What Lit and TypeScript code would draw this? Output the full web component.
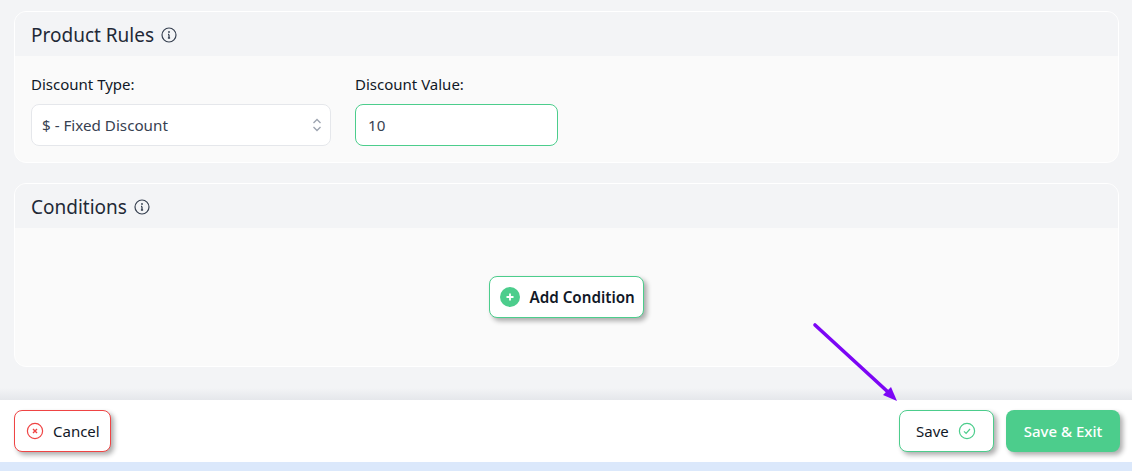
import { LitElement, html, css } from "lit";
import { customElement } from "lit/decorators.js";

const info = html`<svg class="info" viewBox="0 0 16 16" fill="none" stroke="#374151" stroke-width="1.2"><circle cx="8" cy="8" r="7"/><path d="M8 7.4v3.6M6.9 11h2.2M7 7.4h1" stroke-width="1.3"/><circle cx="8" cy="5" r=".9" fill="#374151" stroke="none"/></svg>`;

@customElement("app-root")
export class AppRoot extends LitElement {
  static styles = css`
    :host { display: block; position: relative; width: 1132px; height: 471px; overflow: hidden; background: #f3f4f6; font-family: "Noto Sans", "Open Sans", sans-serif; color: #111827; }
    * { box-sizing: border-box; }
    .page { display: flex; flex-direction: column; height: 100%; }
    .main { flex: 0 0 388px; padding: 11px 13px 0 14px; display: flex; flex-direction: column; gap: 20px; }
    .card { border: 1px solid #fff; border-radius: 12px; background: #fafafa; overflow: hidden; }
    .card-1 { height: 152px; }
    .card-2 { height: 184px; }
    .head { height: 44px; background: #f3f4f6; display: flex; align-items: center; gap: 7px; padding: 1px 0 0 16px; font-size: 19px; color: #1f2937; }
    .info { width: 16px; height: 16px; display: block; }
    .fields { display: flex; gap: 24px; padding: 18px 16px; }
    .field { display: flex; flex-direction: column; gap: 10px; }
    label { font-size: 15px; line-height: 20px; color: #111827; }
    .box { height: 42px; border-radius: 8px; background: #fff; display: flex; align-items: center; padding: 0 10px; font-size: 15.2px; color: #374151; }
    .select { width: 300px; border: 1px solid #e5e7eb; justify-content: space-between; padding-right: 7px; }
    .input { width: 203px; border: 1px solid #4ccd8c; padding-left: 12px; }
    .empty { height: 138px; display: flex; align-items: center; justify-content: center; padding-right: 1px; }
    .btn { height: 42px; border-radius: 8px; display: flex; align-items: center; background: #fff; font-size: 15px; box-shadow: 3px 3px 5px rgba(0,0,0,.32); color: #111827; }
    .add { width: 155px; border: 1px solid #4ccd8c; padding-left: 10px; gap: 10px; font-weight: 600; font-size: 15.2px; white-space: nowrap; }
    .add svg { width: 20px; height: 20px; flex: none; }
    .fade { flex: 0 0 12px; background: linear-gradient(#f3f4f6, #e5e7eb); }
    .bar { flex: 0 0 62px; background: #fff; display: flex; align-items: center; justify-content: space-between; padding: 0 12px 0 14px; }
    .right { display: flex; gap: 12px; }
    .cancel { width: 97px; border: 1px solid #ef4444; padding-left: 11px; gap: 9px; }
    .save { width: 95px; border: 1px solid #4ccd8c; padding-left: 16px; gap: 9px; }
    .exit { width: 114px; background: #4ccd8c; color: #fff; justify-content: center; font-weight: 500; }
    .btn svg.ic { width: 18px; height: 18px; flex: none; }
    .foot { flex: 1; background: #dbe8fb; }
    .arrow { position: absolute; left: 810px; top: 320px; width: 95px; height: 85px; pointer-events: none; }
  `;

  render() {
    return html`
      <div class="page">
        <div class="main">
          <section class="card card-1">
            <div class="head">Product Rules ${info}</div>
            <div class="fields">
              <div class="field">
                <label>Discount Type:</label>
                <div class="box select">$ - Fixed Discount
                  <svg width="12" height="16" viewBox="0 0 12 16" fill="none" stroke="#9ca3af" stroke-width="1.3"><path d="M2.5 6 6 2.5 9.5 6M2.5 10 6 13.5 9.5 10"/></svg>
                </div>
              </div>
              <div class="field">
                <label>Discount Value:</label>
                <div class="box input">10</div>
              </div>
            </div>
          </section>
          <section class="card card-2">
            <div class="head">Conditions ${info}</div>
            <div class="empty">
              <div class="btn add">
                <svg viewBox="0 0 20 20"><circle cx="10" cy="10" r="10" fill="#4ccd8c"/><path d="M10 6.5v7M6.5 10h7" stroke="#fff" stroke-width="1.8"/></svg>
                Add Condition
              </div>
            </div>
          </section>
        </div>
        <div class="fade"></div>
        <div class="bar">
          <div class="btn cancel">
            <svg class="ic" viewBox="0 0 18 18" fill="none" stroke="#ef4444" stroke-width="1.2"><circle cx="9" cy="9" r="7.6"/><path d="M7 7l4 4M11 7l-4 4" stroke-width="1.4"/></svg>
            Cancel
          </div>
          <div class="right">
            <div class="btn save">Save
              <svg class="ic" viewBox="0 0 18 18" fill="none" stroke="#4ccd8c" stroke-width="1.2"><circle cx="9" cy="9" r="7.6"/><path d="M6 9.3l2.1 2.1L12 7"/></svg>
            </div>
            <div class="btn exit">Save &amp; Exit</div>
          </div>
        </div>
        <div class="foot"></div>
      </div>
      <svg class="arrow" viewBox="0 0 95 85">
        <path d="M5 5 L78 72" stroke="#7c06f5" stroke-width="3.6" stroke-linecap="round"/>
        <path d="M87 81 L73 75 L81 67 Z" fill="#7c06f5"/>
      </svg>
    `;
  }
}
